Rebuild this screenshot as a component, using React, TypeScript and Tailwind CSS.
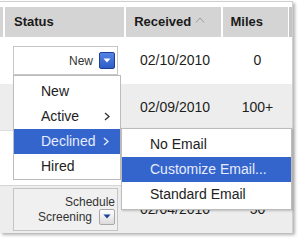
function DownButton({ light = false }: { light?: boolean }) {
  return (
    <div
      className={
        light
          ? "flex h-[16px] w-[16px] items-center justify-center rounded-[2px] border border-[#a8a8a8] bg-gradient-to-b from-white to-[#dcdcdc]"
          : "flex h-[17px] w-[16px] items-center justify-center rounded-[2px] border border-[#1d3f95] bg-gradient-to-b from-[#5584e6] to-[#2d5cc6]"
      }
    >
      <svg width="8" height="5" viewBox="0 0 8 5">
        <path d="M0.5 0.5 H7.5 L4 4.5 Z" fill={light ? "#1f3f99" : "#ffffff"} />
      </svg>
    </div>
  );
}

function Chevron({ color }: { color: string }) {
  return (
    <svg width="6" height="9" viewBox="0 0 6 9">
      <path d="M1 1 L5 4.5 L1 8" fill="none" stroke={color} strokeWidth="1.3" />
    </svg>
  );
}

export default function App() {
  return (
    <div className="relative h-[241px] w-[301px] overflow-hidden bg-white font-['Liberation_Sans',Arial,sans-serif] text-[#1e1e1e]">
      {/* table panel */}
      <div className="mt-[1px] w-[293px] border-t border-r border-[#cfcfcf] bg-white pt-[5px] shadow-[2px_2px_3px_rgba(0,0,0,0.3)]">
        {/* header */}
        <div className="flex h-[30px] gap-[2px] text-[13px] font-bold text-[#1a1a1a]">
          <div className="w-[3px] bg-[#d4d4d4]" />
          <div className="flex w-[120px] items-center bg-[#d4d4d4] pl-[9px]">Status</div>
          <div className="flex w-[96px] items-center bg-[#d4d4d4] pl-[8px]">
            Received
            <svg width="10" height="6" viewBox="0 0 10 6" className="ml-[4px] mb-[4px]">
              <path d="M1 5.5 L5 1 L9 5.5" fill="none" stroke="#9a9a9a" strokeWidth="1" />
            </svg>
          </div>
          <div className="flex w-[65px] items-center bg-[#d4d4d4] pl-[7px]">Miles</div>
          <div className="ml-[-1px] w-[3px] bg-[#c4c4c4]" />
        </div>

        {/* rows */}
        <div className="text-[14px]">
          <div className="flex h-[47px] items-center bg-white">
            <div className="w-[125px] pl-[13px]">
              <div className="flex h-[29px] w-[105px] items-center justify-end gap-[6px] border border-[#c6c6c6] bg-white pr-[2px] text-[12px] text-[#333]">
                New
                <DownButton />
              </div>
            </div>
            <div className="w-[100px] text-center">02/10/2010</div>
            <div className="w-[65px] text-center">0</div>
          </div>

          <div className="flex h-[47px] items-center border-b border-[#dedede] bg-[#ededed]">
            <div className="w-[125px]" />
            <div className="w-[100px] text-center">02/09/2010</div>
            <div className="w-[65px] text-center">100+</div>
          </div>

          {/* row under the open menus */}
          <div className="h-[54px] bg-white" />

          <div className="flex h-[48px] items-center border-t border-[#d6d6d6] bg-[#ededed]">
            <div className="w-[125px] pl-[13px]">
              <div className="flex h-[43px] w-[105px] flex-col items-end justify-center border border-[#c4c4c4] bg-[#f0f0f0] pr-[2px] text-[12px] leading-[14px] text-[#333]">
                <span>Schedule</span>
                <div className="flex items-center gap-[7px]">
                  <span>Screening</span>
                  <DownButton light />
                </div>
              </div>
            </div>
            <div className="w-[100px] text-center">02/04/2010</div>
            <div className="w-[65px] text-center">50</div>
          </div>
        </div>
      </div>

      {/* status menu */}
      <div className="absolute left-[13px] top-[75px] w-[108px] border border-[#bcbcbc] bg-white pt-[3px] text-[14px] text-[#222]">
        <div className="flex h-[25px] items-center pl-[27px]">New</div>
        <div className="flex h-[25px] items-center justify-between pl-[27px] pr-[10px]">
          Active
          <Chevron color="#333" />
        </div>
        <div className="flex h-[25px] items-center gap-[8px] bg-[#3465cc] pl-[27px] text-[#e6ecff]">
          Declined
          <Chevron color="#e6ecff" />
        </div>
        <div className="flex h-[25px] items-center pl-[27px]">Hired</div>
      </div>

      {/* declined submenu */}
      <div className="absolute left-[121px] top-[128px] w-[171px] border border-[#bcbcbc] bg-white pt-[3px] pb-[2px] text-[14px] text-[#222] shadow-[1px_1px_2px_rgba(0,0,0,0.2)]">
        <div className="flex h-[25px] items-center pl-[28px]">No Email</div>
        <div className="flex h-[25px] items-center bg-[#3465cc] pl-[28px] text-[#e6ecff]">Customize Email...</div>
        <div className="flex h-[25px] items-center pl-[28px]">Standard Email</div>
      </div>
    </div>
  );
}
